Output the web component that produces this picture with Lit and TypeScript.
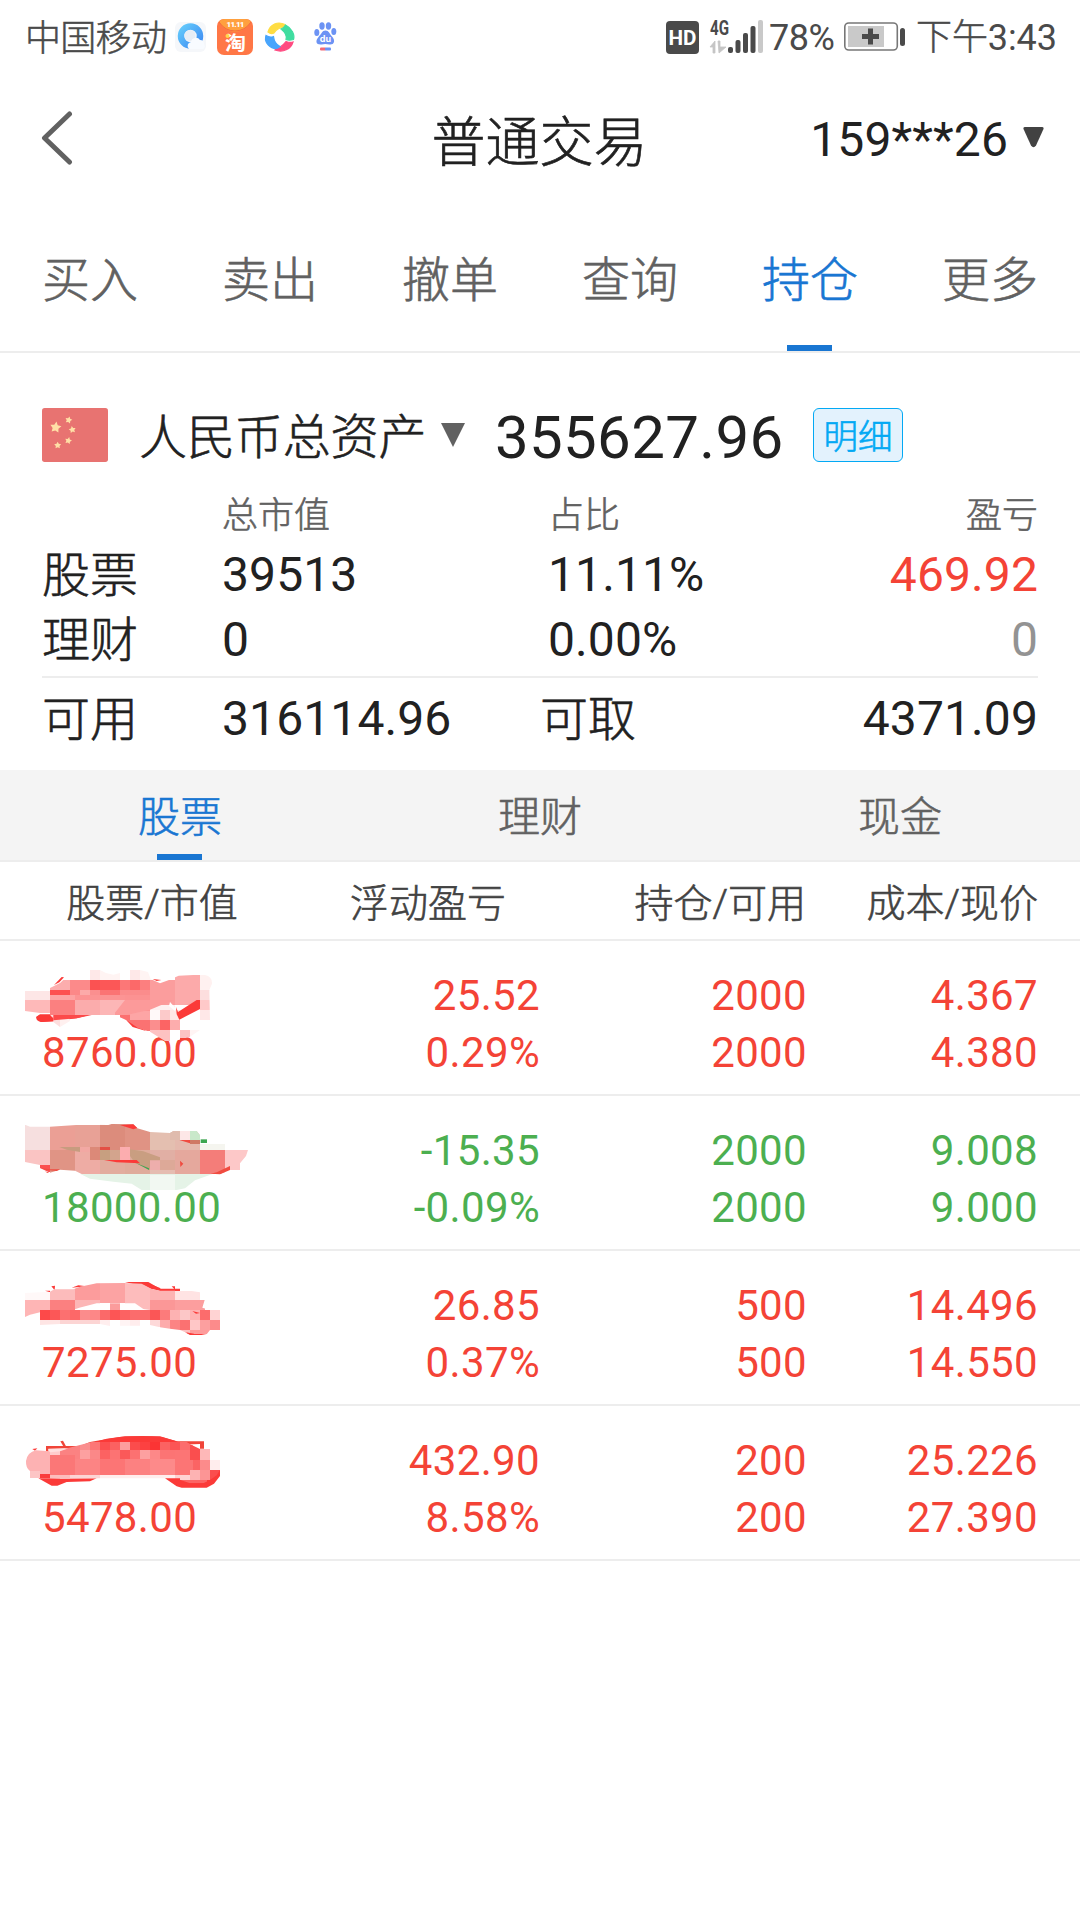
import { LitElement, html, svg, css } from "lit";
import { customElement, property } from "lit/decorators.js";
import { classMap } from "lit/directives/class-map.js";

type Block = [number, number, number, number, string];
interface Smudge {
  outline: string;
  blocks: Block[];
  under: [string, string][];
  over: [string, string][];
}
interface Holding {
  value: string;
  profit: string;
  rate: string;
  held: string;
  free: string;
  cost: string;
  price: string;
  down?: boolean;
  smudge: Smudge;
}

const RED = "#fb3a38";

const holdings: Holding[] = [
  {
    value: "8760.00", profit: "25.52", rate: "0.29%", held: "2000", free: "2000", cost: "4.367", price: "4.380",
    smudge: {
      under: [
        ["M162 132 L185 108 L192 109 L178 124z", RED],
        ["M120 220 H275 L230 232 L160 241 L125 243 Q106 240 109 227z", RED],
        ["M375 233 L398 258 L438 270 L400 246z", RED],
      ],
      outline:
        "M75 150 H125 L150 141 L180 126 L210 99 V117 H270 V87 H300 L318 96 L340 101 L360 96 V117 H390 V87 H420 L444 93 L452 114 L480 127 L505 118 L536 104 L580 102 H615 Q637 106 636 128 L628 147 L630 237 H600 L540 237 V267 H600 L570 287 L525 300 H495 L450 272 L415 262 L380 238 L345 222 H205 L210 240 L180 258 L160 243 L150 222 L120 216 L75 210z",
      blocks: [
        [75, 150, 75, 27, "#fde6e6"], [75, 177, 75, 40, "#feb9b9"], [150, 117, 60, 30, "#fcadad"],
        [150, 147, 60, 15, "#fd5050"], [210, 99, 60, 18, "#fff3f2"], [210, 117, 60, 30, "#fc8a8a"],
        [210, 147, 30, 15, "#fc8888"], [240, 147, 30, 15, "#fcaaa9"], [150, 162, 75, 15, "#fda3a3"],
        [225, 162, 225, 15, "#fc9494"], [150, 177, 75, 45, "#fb8080"], [225, 177, 75, 45, "#fbacac"],
        [300, 177, 75, 45, "#fcb6b6"], [375, 162, 75, 60, "#fc9292"], [270, 87, 30, 30, "#fee8e8"],
        [300, 87, 60, 30, "#fff4f3"], [390, 87, 30, 30, "#fee8e8"], [420, 87, 40, 30, "#fff4f3"],
        [270, 117, 30, 30, "#fb5252"], [300, 117, 60, 30, "#fc5757"], [360, 117, 30, 30, "#fc7777"],
        [390, 117, 30, 30, "#fc6969"], [420, 117, 30, 30, "#fc7f7f"], [270, 147, 30, 15, "#fb8f8f"],
        [300, 147, 60, 15, "#fb7474"], [360, 147, 90, 15, "#fb8c8c"], [450, 117, 75, 78, "#fb9d9d"],
        [525, 102, 75, 90, "#fcaaaa"], [600, 102, 36, 48, "#fff1f0"], [600, 147, 30, 30, "#fddede"],
        [600, 177, 30, 30, "#ffc9c9"], [600, 207, 30, 30, "#ffe8e8"], [450, 192, 75, 45, "#fef0f0"],
        [390, 210, 60, 27, "#fda5a5"], [450, 207, 30, 30, "#fff9f9"], [480, 207, 30, 30, "#fccaca"],
        [510, 207, 30, 30, "#ffe7e7"], [380, 237, 70, 33, "#fb7272"], [450, 237, 30, 30, "#fb8e8e"],
        [480, 237, 30, 30, "#fc6464"], [510, 237, 30, 30, "#fdadad"], [450, 267, 60, 36, "#fdc2c2"],
        [510, 267, 30, 30, "#ffffff"], [540, 267, 30, 24, "#fcc4c4"], [570, 267, 30, 20, "#fff4f4"],
        [150, 222, 30, 40, "#fddede"], [180, 222, 30, 36, "#fff0ef"], [360, 222, 30, 15, "#fc7070"],
      ],
      over: [
        ["M375 177 H520 L450 206 L380 222 H345 V215z", "#fc9a9a"],
        ["M510 183 L524 199 L526 211 L507 195z", "#ffffff"],
        ["M528 198 L534 213 L590 177 H600 V204 L538 236 L530 220z", RED],
        ["M109 229 Q111 220 150 222 L160 232 V241 L122 243z", RED],
        ["M160 222 H275 L230 232 L160 238z", "#fc4a4a"],
        ["M458 114 L484 117 L470 120z", RED],
      ],
    },
  },
  {
    value: "18000.00", profit: "-15.35", rate: "-0.09%", held: "2000", free: "2000", cost: "9.008", price: "9.000", down: true,
    smudge: {
      under: [
        ["M240 233 H640 L585 253 L555 277 L530 282 H425 L395 263 L340 257 L270 248z", "#e5f3e7"],
        ["M602 130 H621 V141 H602z", "#3da651"],
      ],
      outline:
        "M75 86 L90 92 H150 L240 86 L325 87 L335 84 L400 85 L412 97 L450 108 L510 111 L520 105 H590 L600 118 V144 H675 V162 H744 L738 180 L720 202 V222 H690 L660 234 H245 L225 224 L180 221 L150 230 L120 216 V207 L75 198z",
      blocks: [
        [75, 86, 75, 76, "#f6dfdf"], [75, 162, 75, 45, "#fac4c3"], [150, 86, 75, 76, "#eb9f95"],
        [150, 162, 75, 72, "#e09485"], [225, 86, 75, 76, "#e8a196"], [225, 162, 75, 72, "#eeaca4"],
        [300, 84, 75, 78, "#dc8c7c"], [375, 84, 75, 78, "#e09384"], [300, 162, 75, 72, "#e2ac9e"],
        [375, 162, 75, 72, "#dfab9b"], [450, 105, 75, 57, "#e4bfb0"], [450, 162, 75, 30, "#e1afa4"],
        [450, 192, 75, 42, "#e5bcb1"], [525, 105, 75, 57, "#e5b9ad"], [525, 162, 75, 72, "#e5a89d"],
        [600, 144, 75, 18, "#f5f5ef"], [600, 162, 75, 72, "#f47d79"], [675, 162, 70, 60, "#fdc8c8"],
        [270, 153, 30, 39, "#dc8978"], [300, 162, 30, 30, "#c79f80"], [330, 162, 30, 30, "#d3a48d"],
        [360, 153, 30, 39, "#fcadaf"], [450, 192, 30, 30, "#eeaeac"], [480, 192, 45, 30, "#dda998"],
        [510, 105, 30, 27, "#dfbbad"], [540, 105, 30, 27, "#fde7e7"], [570, 105, 30, 27, "#c9e8ca"],
        [120, 208, 30, 20, "#fb5050"], [240, 153, 30, 15, "#f2a8a3"],
      ],
      over: [
        ["M178 153 H240 V168 L200 161z", "#c79c7f"],
        ["M390 160 L430 166 L480 184 V193 H450 V222 L405 201 L390 180z", "#c99e81"],
        ["M300 153 H330 V162 H300z", "#e34f44"],
        ["M312 192 H410 L420 202 L350 199z", RED],
        ["M408 201 L447 217 L447 222z", "#3da651"],
        ["M360 87 L400 85 L412 96 L400 100z", RED],
        ["M538 132 H570 V142z M540 194 L550 203 L541 213z M632 233 L650 229 L690 210 V222 L660 235z M120 216 L150 220 H180 L170 225 L140 222z M135 226 L148 230 L142 231z", "#f04b40"],
        ["M570 132 H600 V144 H570z", "#cf7965"],
        ["M450 237 H525 V282 H450z", "#f2f8f2"],
      ],
    },
  },
  {
    value: "7275.00", profit: "26.85", rate: "0.37%", held: "500", free: "500", cost: "14.496", price: "14.550",
    smudge: {
      under: [
        ["M154 106 L165 104 L164 118z M515 106 H525 V116z M135 119 H150 V124z M215 110 L235 103 L260 106z M375 93 H445 L480 113 H540 V120 H480z M570 180 L600 187 V191z M555 244 L570 252 H620 L600 248z", RED],
      ],
      outline:
        "M75 126 L150 122 L163 115 H220 L240 107 L290 97 L375 96 L425 98 L455 113 L480 119 H570 L600 124 V147 H614 L607 170 L630 177 H660 V237 H630 L620 250 H570 L540 237 L510 233 L480 229 L450 222 H420 V224 H360 V207 H330 V225 L300 219 H180 L120 222 V184 L90 191 L75 198z",
      blocks: [
        [75, 122, 75, 25, "#fff8f8"], [75, 147, 75, 51, "#feb5b5"], [150, 112, 75, 35, "#fcbbbb"],
        [150, 147, 75, 30, "#fb8080"], [225, 97, 75, 50, "#fc9c9c"], [225, 147, 75, 30, "#fcb6b6"],
        [300, 95, 75, 62, "#fca3a3"], [375, 93, 75, 84, "#fdbcbc"], [450, 110, 75, 37, "#fdb3b3"],
        [450, 147, 75, 30, "#fb9797"], [525, 119, 75, 28, "#ffe3e3"], [525, 147, 89, 33, "#fc9e9e"],
        [120, 177, 30, 30, "#fd4949"], [150, 177, 30, 30, "#fc5757"], [180, 177, 30, 30, "#fc7070"],
        [210, 177, 30, 30, "#fd6868"], [240, 177, 30, 30, "#fb8c8c"], [270, 177, 30, 30, "#fd8787"],
        [300, 177, 30, 30, "#fb6969"], [330, 177, 30, 30, "#fd5555"], [360, 177, 30, 30, "#fc6262"],
        [390, 177, 60, 30, "#fb6c6c"], [450, 177, 30, 30, "#fb5656"], [480, 177, 30, 30, "#fc7b7b"],
        [510, 177, 30, 30, "#fdb2b2"], [540, 177, 30, 30, "#fcc7c7"], [570, 177, 30, 30, "#ffb3b3"],
        [600, 177, 30, 30, "#fc6c6c"], [630, 177, 30, 30, "#ffd3d3"], [120, 207, 60, 15, "#fee5e4"],
        [180, 207, 120, 15, "#fcd5d4"], [300, 207, 30, 18, "#ffeeee"], [360, 207, 30, 18, "#fff4f4"],
        [390, 207, 30, 18, "#ffeded"], [450, 207, 30, 20, "#fdd9d9"], [480, 207, 30, 26, "#fdabab"],
        [510, 207, 30, 30, "#fc8484"], [540, 207, 30, 30, "#fb7171"], [570, 207, 30, 30, "#ffc7c7"],
        [600, 207, 30, 30, "#fc9f9f"], [630, 207, 30, 30, "#fc8b8b"], [540, 237, 30, 13, "#fcc0c0"],
        [570, 237, 60, 13, "#fd9c9c"],
      ],
      over: [
        ["M225 175 L238 170 L290 157 H330 V177 H225z M360 157 H405 L430 174 L450 177 H360z", "#ffffff"],
        ["M330 157 H360 V177 H330z", "#fb9c9c"],
        ["M423 95 L445 97 L482 112 L478 116 L455 113z M558 244 L582 248 V251 L565 249z M577 180 L600 186 L588 188z", RED],
      ],
    },
  },
  {
    value: "5478.00", profit: "432.90", rate: "8.58%", held: "200", free: "200", cost: "25.226", price: "27.390",
    smudge: {
      under: [
        ["M138 120 H240 L270 108 L300 103 L360 93 Q430 87 485 93 L530 106 H612 V128 H600 V114 L540 116 L145 128 V138 H138z", "#f04438"],
        ["M181 106 L189 104 L198 121 H190z", "#f04438"],
        ["M285 108 L320 98 L375 91 H480 L525 104 L540 110 H285z", RED],
        ["M115 217 H290 L270 226 L200 228 L172 239 H155z M495 217 L530 241 L545 245 H620 L642 233 L660 210 V190 H600z", RED],
        ["M97 129 L112 127 L105 134z", RED],
      ],
      outline:
        "M78 165 Q82 139 108 133 L150 136 L190 130 L240 117 L275 108 H560 L575 117 L600 129 H630 V162 H660 V192 L650 208 L630 222 L610 232 H570 L535 220 H540 V217 H300 L180 218 L150 217 H90 V195 Q77 186 78 165z",
      blocks: [
        [75, 125, 75, 80, "#fdb2b3"], [90, 195, 30, 22, "#fdc5c5"], [120, 204, 30, 13, "#fa3c3c"],
        [150, 132, 30, 15, "#ffcccc"], [180, 117, 60, 42, "#fb8282"], [150, 147, 75, 60, "#fb7777"],
        [225, 159, 75, 48, "#fc8484"], [240, 132, 30, 27, "#fda0a0"], [240, 108, 30, 24, "#fa8e8e"],
        [270, 108, 30, 24, "#fc7676"], [300, 108, 30, 24, "#fc5050"], [330, 108, 30, 24, "#fb6161"],
        [360, 108, 30, 24, "#fd9d9d"], [390, 108, 30, 24, "#fb4c4c"], [420, 108, 30, 24, "#fc4141"],
        [450, 108, 30, 24, "#fb3434"], [480, 108, 30, 24, "#fb6262"], [510, 108, 30, 24, "#fc5555"],
        [540, 108, 40, 24, "#fc6d6d"], [270, 132, 30, 27, "#fb8888"], [300, 132, 30, 27, "#fc6262"],
        [330, 132, 30, 27, "#fc7373"], [360, 132, 30, 27, "#fb5959"], [390, 132, 30, 27, "#fc7171"],
        [420, 132, 30, 27, "#fda0a0"], [450, 132, 30, 27, "#fd8888"], [480, 132, 45, 27, "#fc7474"],
        [300, 159, 75, 48, "#fc7575"], [375, 159, 75, 48, "#fc8181"], [450, 159, 75, 48, "#fd8a8a"],
        [525, 132, 60, 75, "#fc7575"], [570, 117, 30, 45, "#fa4e4e"], [600, 129, 30, 33, "#feb8b8"],
        [580, 162, 20, 30, "#fb6464"], [600, 162, 30, 30, "#fc8b8b"], [630, 162, 30, 30, "#ffeded"],
        [585, 162, 15, 30, "#fb6464"], [540, 207, 30, 15, "#ffd3d3"], [570, 192, 30, 30, "#fdb3b3"],
        [600, 192, 30, 30, "#fc9595"], [630, 192, 30, 30, "#fb4e4e"], [180, 207, 120, 12, "#fcd5d5"],
        [300, 207, 225, 12, "#ffeeed"], [525, 207, 15, 12, "#fdd0d0"], [540, 222, 80, 12, "#fc6565"],
        [150, 207, 60, 12, "#fcbdbd"],
      ],
      over: [["M145 129 H200 L180 136 L150 139z", "#ffe0e0"]],
    },
  },
];

@customElement("smudged-name")
class SmudgedName extends LitElement {
  @property({ attribute: false }) smudge!: Smudge;
  static styles = css`
    :host { position: absolute; left: 0; top: 0; width: 260px; height: 153px; }
    svg { display: block; }
  `;
  render() {
    const s = this.smudge;
    return html`<svg width="260" height="153" viewBox="0 0 780 459">
      <defs><clipPath id="c"><path d=${s.outline} /></clipPath></defs>
      ${s.under.map(([d, f]) => svg`<path d=${d} fill=${f} />`)}
      <g clip-path="url(#c)" shape-rendering="crispEdges">
        ${s.blocks.map(([x, y, w, h, f]) => svg`<rect x=${x} y=${y} width=${w} height=${h} fill=${f} />`)}
      </g>
      ${s.over.map(([d, f]) => svg`<path d=${d} fill=${f} />`)}
    </svg>`;
  }
}

@customElement("status-bar")
class StatusBar extends LitElement {
  static styles = css`
    :host {
      display: flex; align-items: center; height: 74px; padding: 0 25px 0 25px;
      box-sizing: border-box; color: #4a4a4a; font-size: 36px; line-height: 74px; white-space: nowrap;
    }
    svg { display: block; flex: none; overflow: visible; }
    .cjk { font-weight: 300; -webkit-text-stroke: 0.5px currentColor; }
    .carrier { width: 149px; padding-top: 3px; letter-spacing: -0.7px; }
    .swirl { margin-left: 12px; }
    .shop { margin-left: 10px; }
    .paw { margin-left: 19px; }
    .gap { flex: 1; }
    .signal { margin-left: 10px; }
    .percent { width: 75px; margin-left: 6px; padding-top: 2px; letter-spacing: -0.5px; }
    .time { margin-left: 11px; padding-top: 2px; width: 139px; letter-spacing: -0.1px; }
  `;
  render() {
    return html`
      <span class="carrier cjk">中国移动</span>
      <svg width="33" height="32" viewBox="0 0 33 32">
        <defs>
          <linearGradient id="q" x1="0" y1="0" x2="1" y2="1"><stop stop-color="#63c9fb" /><stop offset="1" stop-color="#3f8cf3" /></linearGradient>
        </defs>
        <rect x="1" y="1" width="31" height="30" rx="6" fill="#f5f7fa" />
        <circle cx="16.500" cy="15" r="9.500" fill="#f3f6fb" stroke="url(#q)" stroke-width="6.500" />
        <circle cx="16" cy="14.500" r="5.500" fill="#e7edf5" />
        <path d="M15 28a4 4 0 0 1 2-7 5 5 0 0 1 9-2 4 4 0 0 1 4 4q2 3-1 5z" fill="#f8fbff" />
      </svg>
      <svg class="shop" width="36" height="36" viewBox="0 0 36 36">
        <rect width="36" height="36" rx="7" fill="#ff7746" />
        <path d="M2 3Q4 0 8 0H28Q32 0 34 3Q29 12 18 13Q7 12 2 3z" fill="#ffa03e" />
        <path d="M2 3Q8 12 18 12T34 3" fill="none" stroke="#f46b40" />
        <text x="9.500" y="8" font-family="Roboto" font-size="8" font-weight="900" textLength="18" fill="#fff">11.11</text>
        <text x="18.500" y="31" text-anchor="middle" font-family="Noto Sans CJK SC" font-size="19" font-weight="700" textLength="21" lengthAdjust="spacingAndGlyphs" fill="#fff">淘</text>
        <circle cx="10.500" cy="17" r="2" fill="#ffd84a" />
      </svg>
      <svg class="swirl" width="30" height="30" viewBox="0 0 30 30" stroke-width="1.200">
        <path d="M3 10C5 2 13-1 20 2.500L20.500 5C14 5 11 8 9 11Q6 12.500 3 10z" fill="#ffdd43" stroke="#ffdd43" />
        <path d="M20.500 3C27 6 30 13 28.500 17.500Q24 19 21 17.500C22 14 20 10 16 7Q19 6 20.500 3z" fill="#40dda0" stroke="#40dda0" />
        <path d="M28 20C26 27 18 31 10 28L12 26C17 25 19 22 21 19.500Q25 21 28 20z" fill="#ff4a80" stroke="#ff4a80" />
        <path d="M1 13.500Q5 16 8.500 14.500C9 19 12 23 15 24.500Q12 27 9 26.500C3 25-1 19 1 13.500z" fill="#48a5fc" stroke="#48a5fc" />
      </svg>
      <svg class="paw" width="23" height="30" viewBox="0 0 23 30" fill="#6c93f4">
        <ellipse cx="2.800" cy="10.500" rx="2.500" ry="3.500" /><ellipse cx="8" cy="4" rx="2.700" ry="3.700" />
        <ellipse cx="14.500" cy="4" rx="2.700" ry="3.700" /><ellipse cx="19.800" cy="9.500" rx="2.500" ry="3.500" />
        <path d="M11.500 8.500C15 8.500 15.500 12 18 14.500C22 19 20 23 15.500 22.500Q11 21.500 7.500 22.500C2 23 1 19 4.500 15C7.500 12 8 8.500 11.500 8.500z" />
        <text x="11.500" y="20" text-anchor="middle" font-family="Inter" font-size="9" font-weight="700" fill="#fff">du</text>
        <rect x="6" y="25.500" width="6" height="3" rx="1" fill="#f26a76" /><rect x="11" y="25.500" width="6" height="3" rx="1" />
      </svg>
      <span class="gap"></span>
      <svg width="33" height="33" viewBox="0 0 33 33">
        <rect width="33" height="33" rx="4" fill="#4a4a4a" />
        <text x="16.500" y="24" text-anchor="middle" font-family="Roboto" font-size="21" font-weight="700" textLength="28" lengthAdjust="spacingAndGlyphs" fill="#fff">HD</text>
      </svg>
      <svg class="signal" width="54" height="36" viewBox="0 0 54 36" fill="#4a4a4a">
        <text x="1" y="15.500" font-family="Roboto" font-size="20" font-weight="700" textLength="19" lengthAdjust="spacingAndGlyphs">4G</text>
        <path d="M1 28L6 22V34H4V28z M9 22H11V28H17L10 34z" fill="#c5c5c5" stroke="#c5c5c5" stroke-width="0.800" />
        <rect x="19" y="28" width="5" height="6" rx="2" /><rect x="26.500" y="21" width="5" height="13" rx="2" />
        <rect x="34" y="14" width="5" height="20" rx="2" /><rect x="41.500" y="7" width="5" height="27" rx="2" />
        <rect x="49" y="1" width="5" height="33" rx="2" fill="#c9c9c9" />
      </svg>
      <span class="percent">78%</span>
      <svg width="61" height="30" viewBox="0 0 61 30">
        <rect x="0.800" y="1" width="52.500" height="27" rx="4" fill="#fff" stroke="#777" stroke-width="1.600" />
        <rect x="4" y="4" width="36" height="21" fill="#c9c9c9" />
        <path d="M18 14.500H35M26.500 6.500V22.500" stroke="#4a4a4a" stroke-width="5" />
        <rect x="56" y="6" width="5" height="18" rx="2.500" fill="#4a4a4a" />
      </svg>
      <span class="time"><span class="cjk">下午</span>3:43</span>
    `;
  }
}

@customElement("app-root")
class AppRoot extends LitElement {
  static styles = css`
    :host {
      display: block; width: 1080px; height: 1920px; overflow: hidden; background: #fff; color: #212121;
      font-family: Roboto, "Noto Sans CJK SC", sans-serif; font-size: 48px; font-weight: 400;
    }
    .cjk { font-weight: 300; -webkit-text-stroke: 0.6px currentColor; }
    svg { display: block; flex: none; }
    .header {
      display: grid; grid-template-columns: 330px 1fr 330px; grid-template-rows: 130px; align-items: center;
      height: 130px; padding: 0 36px 0 40px; box-sizing: border-box;
    }
    .back { margin-top: -2px; }
    .title { text-align: center; font-size: 54px; line-height: 80px; padding: 9px 5px 0 0; }
    .account { display: flex; align-items: center; justify-content: flex-end; gap: 15px; line-height: 80px; padding-top: 2px; letter-spacing: 0.1px; }
    .account svg { margin-top: -5px; }
    .tabs { display: grid; grid-template-columns: repeat(6, 1fr); height: 147px; border-bottom: 2px solid #ededed; }
    .tab { display: flex; flex-direction: column; align-items: center; color: #616161; line-height: 60px; padding-top: 47px; }
    .tab::after, .kind::after { content: ""; width: 45px; height: 6px; margin: auto 1px 0 0; }
    .on { color: #1976d2; }
    .on::after { background: #1976d2; }
    .assets { padding: 55px 42px 0; height: 417px; box-sizing: border-box; letter-spacing: 0.1px; }
    .total { display: flex; align-items: center; height: 54px; line-height: 54px; }
    .currency { margin-left: 31px; width: 289px; padding-top: 6px; letter-spacing: -0.1px; }
    .down { margin: -1px 0 0 13px; }
    .amount { margin-left: 30px; font-size: 60px; width: 289px; padding-top: 5px; letter-spacing: 0.32px; }
    .detail {
      margin-left: 29px; width: 90px; height: 54px; box-sizing: border-box; border: 1px solid #03a9f4;
      border-radius: 6px; background: #e3f2fd; color: #03a9f4; font-size: 34.5px; line-height: 57px; text-align: center;
    }
    .line { display: grid; grid-template-columns: 180px 326px 1fr auto; line-height: 65px; }
    .label { padding-top: 1px; }
    .heads { font-size: 36px; line-height: 48px; height: 50px; padding-top: 30px; color: #616161; letter-spacing: 0; }
    .first { height: 65px; }
    .second { height: 69px; }
    .cash { grid-template-columns: 180px 318px 1fr auto; border-top: 2px solid #ededed; line-height: 81px; }
    .up { color: #f44336; }
    .zero { color: #939393; }
    .kinds {
      display: grid; grid-template-columns: repeat(3, 1fr); height: 90px; background: #f4f4f4;
      border-bottom: 2px solid #ededed; font-size: 42px; line-height: 56px;
    }
    .kind { display: flex; flex-direction: column; align-items: center; color: #616161; padding-top: 20px; }
    .kind.on { color: #1976d2; }
    .cols, .row {
      display: grid; grid-template-columns: 220px 278px 266px 232px; padding: 0 42px;
      border-bottom: 2px solid #ededed; text-align: right;
    }
    .row { grid-template-columns: 220px 278px 267px 231px; }
    .cols { height: 77px; line-height: 84px; font-size: 39px; color: #424242; }
    .cols .name { text-align: center; }
    .cols .float { padding-right: 34px; }
    .row {
      position: relative; height: 127px; padding-top: 26px; font-size: 42px; line-height: 57px;
      grid-auto-rows: 57px; align-content: start; color: #f44336; letter-spacing: 0.35px;
    }
    .row.loss { color: #4caf50; }
    .row .value { text-align: left; }
  `;

  private tabs = ["买入", "卖出", "撤单", "查询", "持仓", "更多"];
  private kinds = ["股票", "理财", "现金"];

  render() {
    return html`
      <status-bar></status-bar>
      <div class="header">
        <svg class="back" width="34" height="54" viewBox="0 0 34 54"><path d="M29.500 3L4.500 27L29.500 51" fill="none" stroke="#616161" stroke-width="5" stroke-linecap="round" stroke-linejoin="round" /></svg>
        <div class="title cjk">普通交易</div>
        <div class="account">
          <span>159***26</span>
          <svg width="21" height="21" viewBox="0 0 21 21"><path d="M2 0H19Q21 0 20.500 2L13 18.500Q10.500 22 8 18.500L0.500 2Q0 0 2 0z" fill="#424242" /></svg>
        </div>
      </div>
      <div class="tabs cjk">
        ${this.tabs.map((t) => html`<div class=${classMap({ tab: true, on: t === "持仓" })}>${t}</div>`)}
      </div>
      <div class="assets">
        <div class="total">
          <svg width="66" height="54" viewBox="0 0 198 162">
            <rect width="198" height="162" rx="8" fill="#e87371" />
            <defs><path id="s" d="M0-10L3-4L9.500-3.100L5 1.800L5.900 8.100L0 5.300L-5.900 8.100L-5 1.800L-9.500-3.100L-3-4z" fill="#ffdfa6" /></defs>
            <use href="#s" transform="translate(41 58) rotate(8) scale(1.750)" />
            <use href="#s" transform="translate(80 36) rotate(15) scale(1.100)" />
            <use href="#s" transform="translate(91 65) rotate(-10) scale(1.100)" />
            <use href="#s" transform="translate(79 98) rotate(15) scale(1.100)" />
            <use href="#s" transform="translate(47 112) scale(1.100)" />
          </svg>
          <span class="currency cjk">人民币总资产</span>
          <svg class="down" width="24" height="24" viewBox="0 0 24 24"><path d="M0 0H24L12 24z" fill="#616161" /></svg>
          <span class="amount">355627.96</span>
          <span class="detail cjk">明细</span>
        </div>
        <div class="line heads cjk"><span></span><span>总市值</span><span>占比</span><span>盈亏</span></div>
        <div class="line first"><span class="label cjk">股票</span><span>39513</span><span>11.11%</span><span class="up">469.92</span></div>
        <div class="line second"><span class="label cjk">理财</span><span>0</span><span>0.00%</span><span class="zero">0</span></div>
        <div class="line cash"><span class="label cjk">可用</span><span>316114.96</span><span class="label cjk">可取</span><span>4371.09</span></div>
      </div>
      <div class="kinds cjk">
        ${this.kinds.map((k) => html`<div class=${classMap({ kind: true, on: k === "股票" })}>${k}</div>`)}
      </div>
      <div class="cols cjk">
        <span class="name">股票/市值</span><span class="float">浮动盈亏</span><span>持仓/可用</span><span>成本/现价</span>
      </div>
      ${holdings.map(
        (h) => html`<div class=${classMap({ row: true, loss: !!h.down })}>
          <span></span><span>${h.profit}</span><span>${h.held}</span><span>${h.cost}</span>
          <span class="value">${h.value}</span><span>${h.rate}</span><span>${h.free}</span><span>${h.price}</span>
          <smudged-name .smudge=${h.smudge}></smudged-name>
        </div>`
      )}
    `;
  }
}
